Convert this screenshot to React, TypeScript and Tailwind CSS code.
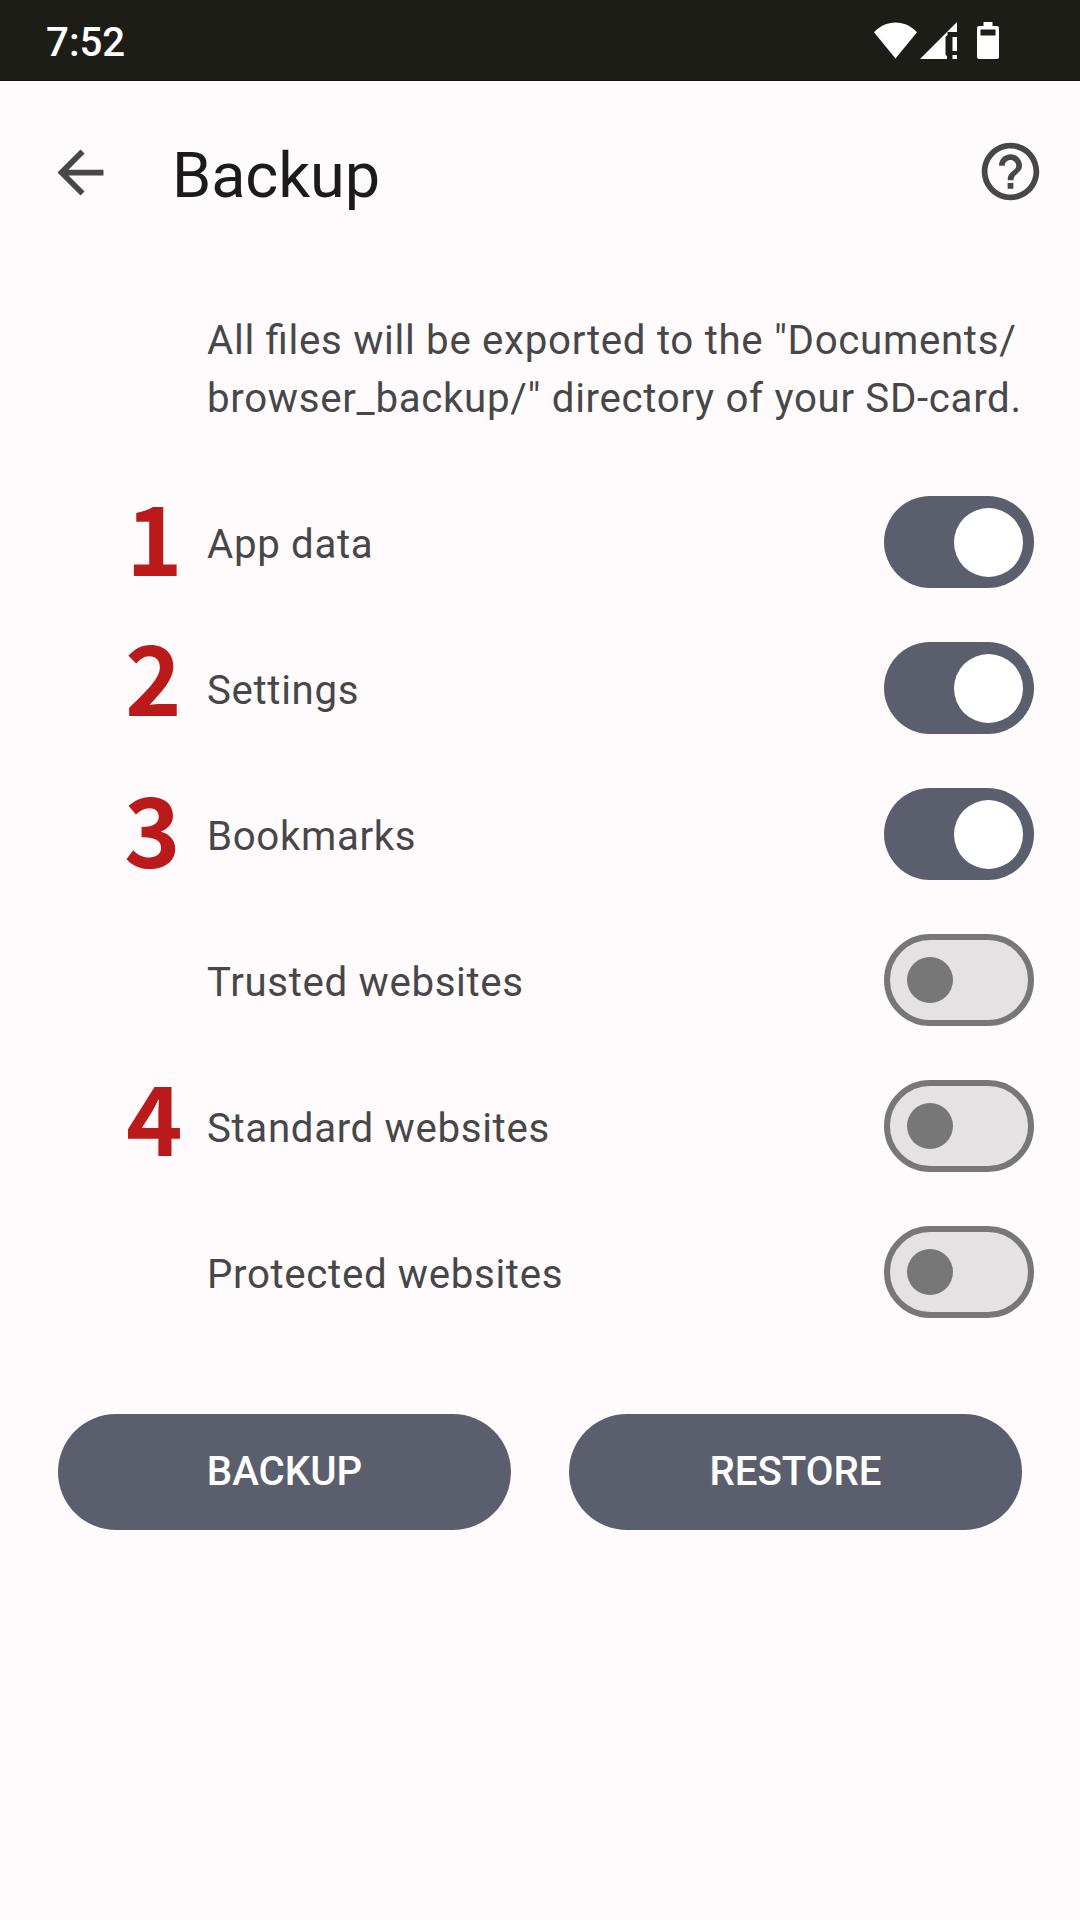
import { useState } from 'react';

type Option = { label: string; on: boolean; mark?: string; markClass?: string };

const OPTIONS: Option[] = [
  { label: 'App data', on: true, mark: '1', markClass: 'top-[-29px] left-[126px]' },
  { label: 'Settings', on: true, mark: '2', markClass: 'top-[-35px] left-[125px]' },
  { label: 'Bookmarks', on: true, mark: '3', markClass: 'top-[-29px] left-[124px]' },
  { label: 'Trusted websites', on: false },
  { label: 'Standard websites', on: false, mark: '4', markClass: 'top-[-33px] left-[126px]' },
  { label: 'Protected websites', on: false },
];

function StatusBar() {
  return (
    <div className="flex h-[81px] items-start justify-between border-b border-[#14150f] bg-[#1c1d17] pl-[46px] pr-[81px] text-white">
      <span className="pt-[19px] text-[40.25px] leading-[48px] font-medium">7:52</span>
      <div className="flex pt-[22px]">
        <svg className="h-[37px] w-[43px]" viewBox="0 0 43 37" fill="currentColor">
          <path d="M0 10.2C5.6 4.2 13.2.5 21.5.5S37.400 4.200 43 10.200L21.500 36.400z" />
        </svg>
        <svg className="ml-[3px] h-[37px] w-[37px]" viewBox="0 0 37 37" fill="currentColor">
          <path d="M37 0V10H27.500V13L25.500 15V33L27 34V37H0z" />
          <path d="M32.500 15H37V29H32.500zM32.500 33H37V37H32.500z" />
        </svg>
        <svg className="ml-5 h-[37px] w-[22px]" viewBox="0 0 22 37" fill="currentColor" fillRule="evenodd">
          <path d="M6.500 0h9v4H20a2 2 0 0 1 2 2v29a2 2 0 0 1-2 2H2a2 2 0 0 1-2-2V6a2 2 0 0 1 2-2h4.500zM3.500 7.500v6h15v-6z" />
        </svg>
      </div>
    </div>
  );
}

function Header() {
  return (
    <header className="flex h-[183px] items-start pl-[46px] pr-[35px] text-[#474749]">
      <button aria-label="Back" className="mt-[57px]">
        <svg className="size-[69px]" viewBox="0 0 24 24" fill="currentColor">
          <path d="M20 11H7.830l5.590-5.590L12 4l-8 8 8 8 1.410-1.410L7.830 13H20z" />
        </svg>
      </button>
      <h1 className="ml-[57px] mt-[58px] grow text-[63px] leading-[74px] tracking-[-0.1px] text-[#1b1b1d]">Backup</h1>
      <button aria-label="Help" className="mt-[56px]">
        <svg className="size-[69px]" viewBox="0 0 24 24" fill="currentColor">
          <path d="M11 18h2v-2h-2v2zm1-16C6.480 2 2 6.480 2 12s4.480 10 10 10 10-4.480 10-10S17.520 2 12 2zm0 18c-4.410 0-8-3.590-8-8s3.590-8 8-8 8 3.590 8 8-3.590 8-8 8zm0-14c-2.210 0-4 1.790-4 4h2c0-1.100.9-2 2-2s2 .9 2 2c0 2-3 1.750-3 5h2c0-2.250 3-2.500 3-5 0-2.210-1.790-4-4-4z" />
        </svg>
      </button>
    </header>
  );
}

function Toggle({ on, label, onClick }: { on: boolean; label: string; onClick: () => void }) {
  return (
    <button
      role="switch"
      aria-checked={on}
      aria-label={label}
      onClick={onClick}
      className={
        on
          ? 'flex h-[92px] w-[150px] items-center justify-end rounded-full bg-[#5b5e6c] pr-[11.5px]'
          : 'flex h-[92px] w-[150px] items-center rounded-full border-6 border-[#777777] bg-[#e4e2e3] pl-[17px]'
      }
    >
      <span className={on ? 'size-[69px] rounded-full bg-white' : 'size-[46px] rounded-full bg-[#777777]'} />
    </button>
  );
}

export default function App() {
  const [states, setStates] = useState(OPTIONS.map((o) => o.on));
  return (
    <div className="flex h-[1920px] w-[1080px] flex-col bg-[#fffbfd] font-['Roboto',sans-serif]">
      <StatusBar />
      <Header />
      <main className="text-[40.25px] text-[#474749]">
        <p className="h-[205px] pl-[207px] pt-[48px] leading-[58px] tracking-[0.68px] whitespace-nowrap [font-feature-settings:'liga']">
          All files will be exported to the "Documents/
          <br />
          browser_backup/" directory of your SD-card.
        </p>
        <ul className="pt-[27px]">
          {OPTIONS.map((o, i) => (
            <li key={o.label} className="relative mb-[54px] flex h-[92px] items-center justify-between pl-[207px] pr-[46px]">
              {o.mark && (
                <span
                  className={`absolute ${o.markClass} font-['Noto_Sans_CJK_SC',sans-serif] text-[96px] leading-[136px] font-bold text-[#bb1a1b]`}
                >
                  {o.mark}
                </span>
              )}
              <span className="pt-[7px] tracking-[0.65px]">{o.label}</span>
              <Toggle
                on={states[i]}
                label={o.label}
                onClick={() => setStates(states.map((s, j) => (j === i ? !s : s)))}
              />
            </li>
          ))}
        </ul>
        <div className="mt-[96px] flex gap-[58px] px-[58px] text-white">
          {['BACKUP', 'RESTORE'].map((t) => (
            <button key={t} className="h-[116px] flex-1 rounded-full bg-[#5b5e6c] font-medium">
              {t}
            </button>
          ))}
        </div>
      </main>
    </div>
  );
}
